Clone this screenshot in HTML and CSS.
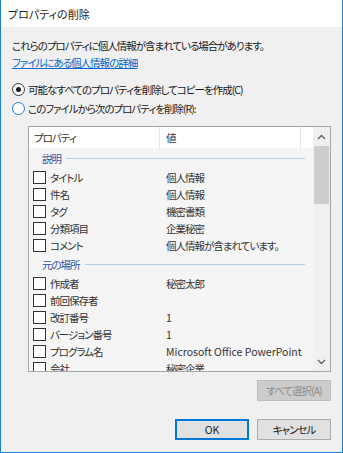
FILE: index.html
```html
<!DOCTYPE html>
<html lang="ja">

<head>
    <meta charset="UTF-8">
    <title>プロパティの削除</title>
    <link rel="stylesheet" href="styles.css">
</head>

<body>
    <div class="window">
        <div class="titlebar">プロパティの削除</div>
        <div class="content">
            <div class="line">これらのプロパティに個人情報が含まれている場合があります。</div>
            <div class="line"><a class="link" href="#">ファイルにある個人情報の詳細</a></div>

            <div class="radios">
                <div class="radio"><span class="dot checked"></span>可能なすべてのプロパティを削除してコピーを作成(C)</div>
                <div class="radio"><span class="dot hover"></span>このファイルから次のプロパティを削除(R):</div>
            </div>

            <div class="list">
                <div class="list-main">
                    <div class="list-head">
                        <div class="hcol hcol-name">プロパティ</div>
                        <div class="hcol hcol-value">値</div>
                        <div class="hcol hcol-rest"></div>
                    </div>
                    <div class="group"><span>説明</span><i></i></div>
                    <div class="row"><div class="cell"><span class="box"></span>タイトル</div><div class="val">個人情報</div></div>
                    <div class="row"><div class="cell"><span class="box"></span>件名</div><div class="val">個人情報</div></div>
                    <div class="row"><div class="cell"><span class="box"></span>タグ</div><div class="val">機密書類</div></div>
                    <div class="row"><div class="cell"><span class="box"></span>分類項目</div><div class="val">企業秘密</div></div>
                    <div class="row"><div class="cell"><span class="box"></span>コメント</div><div class="val">個人情報が含まれています。</div></div>
                    <div class="group"><span>元の場所</span><i></i></div>
                    <div class="row"><div class="cell"><span class="box"></span>作成者</div><div class="val">秘密太郎</div></div>
                    <div class="row"><div class="cell"><span class="box"></span>前回保存者</div><div class="val"></div></div>
                    <div class="row"><div class="cell"><span class="box"></span>改訂番号</div><div class="val latin">1</div></div>
                    <div class="row"><div class="cell"><span class="box"></span>バージョン番号</div><div class="val latin">1</div></div>
                    <div class="row"><div class="cell"><span class="box"></span>プログラム名</div><div class="val latin">Microsoft Office PowerPoint</div></div>
                    <div class="row"><div class="cell"><span class="box"></span>会社</div><div class="val">秘密企業</div></div>
                </div>
                <div class="scrollbar">
                    <div class="arrow">
                        <svg width="9" height="6" viewBox="0 0 9 6"><path d="M1 5 L4.5 1.5 L8 5" fill="none" stroke="#606060" stroke-width="1.3"/></svg>
                    </div>
                    <div class="thumb"></div>
                    <div class="track"></div>
                    <div class="arrow">
                        <svg width="9" height="6" viewBox="0 0 9 6"><path d="M1 1 L4.5 4.5 L8 1" fill="none" stroke="#606060" stroke-width="1.3"/></svg>
                    </div>
                </div>
            </div>

            <div class="btn-row first">
                <button class="btn disabled">すべて選択(A)</button>
            </div>
            <div class="btn-row last">
                <button class="btn default">OK</button>
                <button class="btn">キャンセル</button>
            </div>
        </div>
    </div>
</body>

</html>
```

FILE: styles.css
```css
body {
    margin: 0;
    font-family: "Noto Sans CJK JP", sans-serif;
    font-size: 11px;
    font-feature-settings: "palt";
    color: #1a1a1a;
}

.window {
    width: 343px;
    height: 453px;
    box-sizing: border-box;
    border: 1px solid #1a80d8;
    border-top: none;
    background: #f0f0f0;
    display: flex;
    flex-direction: column;
}

.titlebar {
    height: 27px;
    background: #fff;
    padding-left: 7px;
    display: flex;
    align-items: center;
    color: #222;
}

.content {
    padding: 10px 11px 0 11px;
    font-size: 10.5px;
    letter-spacing: -1px;
}

.latin {
    letter-spacing: 0;
}

.line {
    height: 17px;
    line-height: 17px;
}

.link {
    color: #0066cc;
    text-decoration: underline;
}

.radios {
    margin-top: 10px;
}

.radio {
    height: 17px;
    line-height: 17px;
    margin-bottom: 2px;
    display: flex;
    align-items: center;
}

.dot {
    width: 13px;
    height: 13px;
    box-sizing: border-box;
    border: 1px solid #333;
    border-radius: 50%;
    background: #fff;
    margin-right: 3px;
    position: relative;
}

.dot.checked::after {
    content: "";
    position: absolute;
    left: 3px;
    top: 3px;
    width: 5px;
    height: 5px;
    border-radius: 50%;
    background: #1a1a1a;
}

.dot.hover {
    border-color: #1a80d8;
}

.list {
    margin: 9px 0 0 16px;
    width: 303px;
    height: 246px;
    box-sizing: border-box;
    border: 1px solid #a6a6a6;
    display: flex;
    background: #f5f5f5;
}

.list-main {
    flex: 1;
    overflow: hidden;
    color: #333;
}

.list-head {
    height: 21px;
    background: #fff;
    display: flex;
}

.hcol {
    line-height: 21px;
    box-sizing: border-box;
    border-right: 1px solid #e5e5e5;
}

.hcol-name {
    width: 131px;
    padding-left: 5px;
}

.hcol-value {
    width: 141px;
    padding-left: 6px;
}

.hcol-rest {
    flex: 1;
    border-right: none;
}

.group {
    height: 21px;
    display: flex;
    align-items: center;
    padding-left: 13px;
    color: #2f55a4;
}

.group i {
    flex: 1;
    height: 1px;
    background: #b9cbe8;
    margin: 0 8px 0 5px;
}

.row {
    height: 17px;
    line-height: 17px;
    display: flex;
    align-items: center;
}

.cell {
    width: 137px;
    display: flex;
    align-items: center;
}

.box {
    width: 13px;
    height: 13px;
    box-sizing: border-box;
    border: 1px solid #333;
    background: #fff;
    margin: 0 4px;
}

.val {
    white-space: nowrap;
}

.scrollbar {
    width: 17px;
    display: flex;
    flex-direction: column;
    background: #f0f0f0;
}

.arrow {
    height: 19px;
    display: flex;
    align-items: center;
    justify-content: center;
}

.thumb {
    height: 58px;
    margin: 0 1px;
    background: #cdcdcd;
}

.track {
    flex: 1;
}

.btn-row {
    display: flex;
    justify-content: flex-end;
    gap: 8px;
}

.btn-row.first {
    margin-top: 8px;
}

.btn-row.last {
    margin-top: 18px;
}

.btn {
    width: 74px;
    height: 21px;
    padding: 0;
    font-family: inherit;
    font-size: 10.5px;
    letter-spacing: -1px;
    font-feature-settings: "palt";
    background: #e1e1e1;
    border: 1px solid #adadad;
    color: #1a1a1a;
}

.btn.disabled {
    background: #cccccc;
    border-color: #bfbfbf;
    color: #8a8a8a;
}

.btn.default {
    border: 2px solid #0078d7;
    letter-spacing: 0;
}
```
